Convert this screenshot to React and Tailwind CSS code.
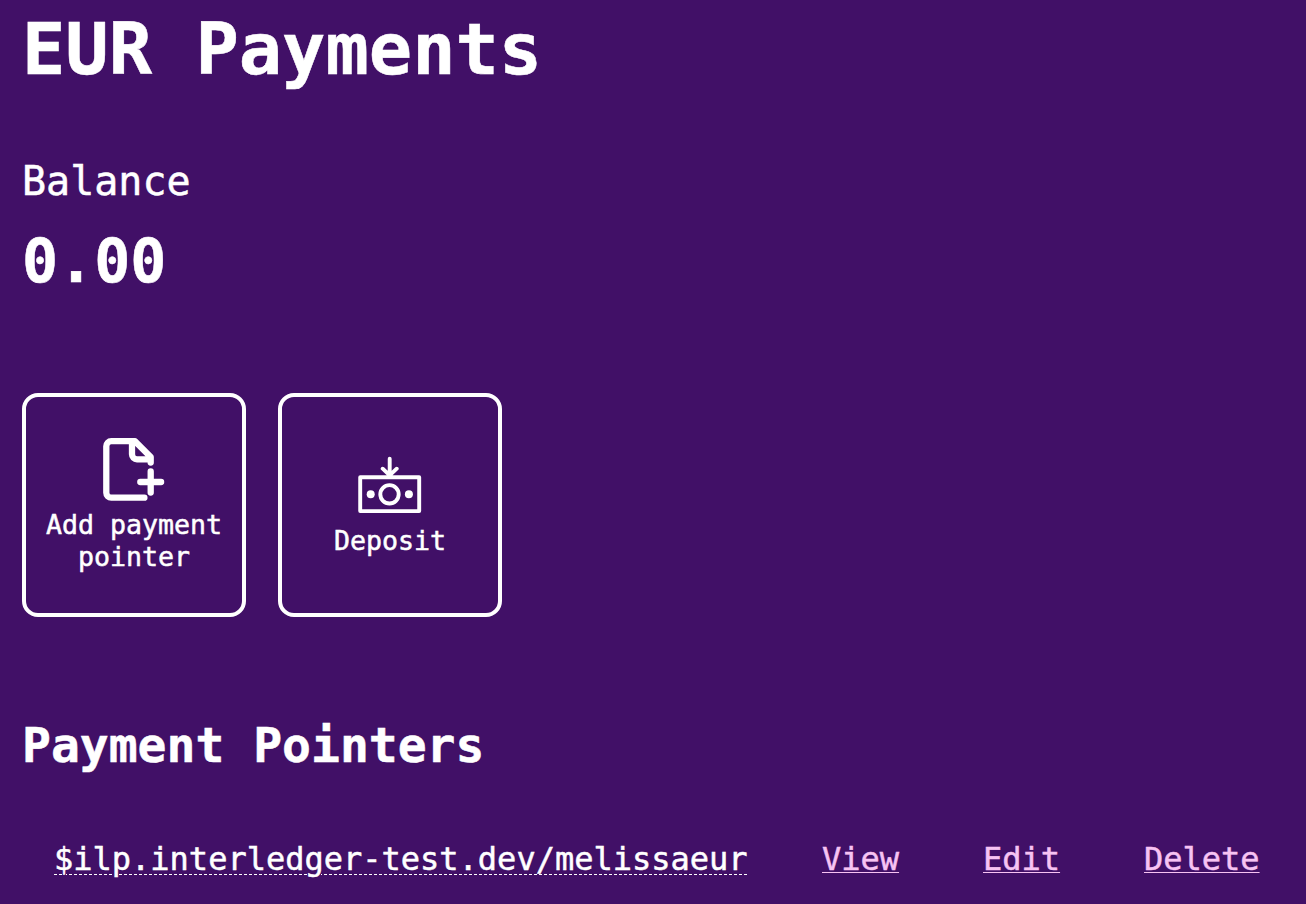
export default function App() {
  return (
    <main className="flex h-[904px] w-full flex-col overflow-hidden bg-[#411067] pl-[22px] font-['DejaVu_Sans_Mono',monospace] text-white [-webkit-text-stroke:0.5px_currentColor]">
      <h1 className="pt-[5px] text-[72px] leading-[88px] font-bold">EUR Payments</h1>
      <p className="mt-[64px] text-[40px] leading-[48px]">Balance</p>
      <p className="mt-[20px] text-[60px] leading-[72px] font-bold">0.00</p>
      <div className="mt-[96px] flex gap-8">
        <button className="flex h-[224px] w-[224px] flex-col items-center justify-center rounded-2xl border-4 border-white text-[26.6px] leading-8">
          <svg className="h-[64px] w-[64px]" viewBox="0 0 64 64" fill="none" stroke="white" strokeWidth="6.3" strokeLinecap="round" strokeLinejoin="round">
            <path d="M42.4 60.7H9.3a5 5 0 0 1-5-5V9.2a5 5 0 0 1 5-5h23.7l15.7 15.7v5.6M30 4.5v12.8a5 5 0 0 0 5 5h13M48.7 34.5v21M38.3 45h20.8" />
          </svg>
          <span className="mt-2">Add payment<br />pointer</span>
        </button>
        <button className="flex h-[224px] w-[224px] flex-col items-center justify-center rounded-2xl border-4 border-white text-[26.6px] leading-8">
          <svg className="h-[64px] w-[64px]" viewBox="0 0 64 64" fill="none" stroke="white" strokeWidth="3.9" strokeLinecap="round" strokeLinejoin="round">
            <path d="M2.2 24.3h59v33.8h-59zM31.7 5.7v17M24.7 15.7l7 6.7 7-6.7" />
            <circle cx="31.5" cy="41.3" r="9.2" />
            <circle cx="12.7" cy="41.2" r="4" fill="white" stroke="none" />
            <circle cx="50.9" cy="41.2" r="4" fill="white" stroke="none" />
          </svg>
          <span className="mt-2">Deposit</span>
        </button>
      </div>
      <h2 className="mt-[98px] text-[48px] leading-[60px] font-bold">Payment Pointers</h2>
      <div className="mt-[64px] flex pl-8 text-[32px] leading-10">
        <div className="w-[768px]"><span className="underline decoration-dashed decoration-1 underline-offset-[4px]">$ilp.interledger-test.dev/melissaeur</span></div>
        <a className="w-[161px] text-[#f7c3f3] underline decoration-1 underline-offset-[2px]">View</a>
        <a className="w-[161px] text-[#f7c3f3] underline decoration-1 underline-offset-[2px]">Edit</a>
        <a className="text-[#f7c3f3] underline decoration-1 underline-offset-[2px]">Delete</a>
      </div>
    </main>
  );
}
